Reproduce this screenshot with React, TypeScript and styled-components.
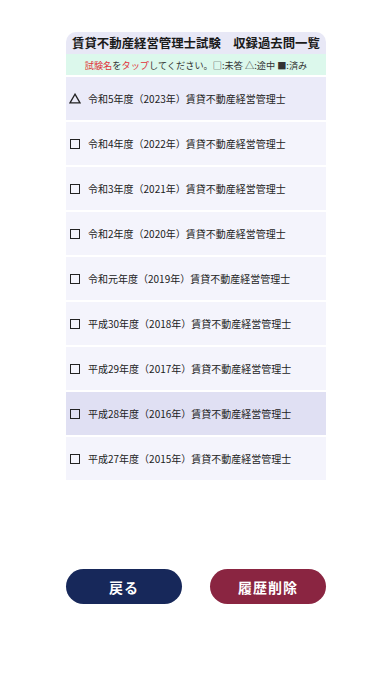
import { createGlobalStyle } from 'styled-components'
import styled from 'styled-components'

const GlobalStyle = createGlobalStyle`
  html, body {
    margin: 0;
    padding: 0;
    background: #ffffff;
    font-family: "Noto Sans CJK JP", "Noto Sans", sans-serif;
  }
`

const Page = styled.div`
  width: 392px;
  height: 696px;
  display: flex;
  flex-direction: column;
  align-items: center;
  padding-top: 32px;
  box-sizing: border-box;
`

const Panel = styled.div`
  width: 260px;
  display: flex;
  flex-direction: column;
`

const Title = styled.div`
  height: 22px;
  display: flex;
  align-items: center;
  justify-content: center;
  background: #e8e8f6;
  border-radius: 10px 10px 0 0;
  font-size: 12.4px;
  font-weight: 700;
  color: #1a1a1a;
  white-space: nowrap;
`

const Hint = styled.div`
  height: 21px;
  display: flex;
  align-items: center;
  justify-content: center;
  background: #dcf8ec;
  font-size: 9.2px;
  color: #333;
  white-space: nowrap;
`

const Red = styled.span`
  color: #e0333a;
`

const List = styled.div`
  display: flex;
  flex-direction: column;
  gap: 2px;
  margin-top: 2px;
`

const Row = styled.div<{ $tone: 'active' | 'pressed' | 'plain' }>`
  height: 43px;
  display: flex;
  align-items: center;
  padding-left: 3px;
  background: ${({ $tone }) =>
    $tone === 'active' ? '#ebebf9' : $tone === 'pressed' ? '#e0e0f3' : '#f4f4fc'};
  font-size: 10px;
  color: #222;
  white-space: nowrap;
`

const Mark = styled.span`
  width: 12px;
  display: inline-flex;
  justify-content: center;
  align-items: center;
  margin-right: 7px;
`

const Box = styled.span`
  width: 8px;
  height: 8px;
  border: 1.4px solid #222;
`

const Buttons = styled.div`
  width: 260px;
  display: flex;
  justify-content: space-between;
  margin-top: 89px;
`

const Button = styled.button<{ $color: string }>`
  width: 116px;
  height: 35px;
  border: none;
  border-radius: 18px;
  background: ${({ $color }) => $color};
  color: #ffffff;
  font-family: inherit;
  font-size: 14px;
  font-weight: 700;
  letter-spacing: 1px;
`

const Triangle = () => (
  <svg width="12" height="11" viewBox="0 0 12 11">
    <path d="M6 1.2 L11 9.8 H1 Z" fill="none" stroke="#222" strokeWidth="1.3" strokeLinejoin="miter" />
  </svg>
)

const exams = [
  { label: '令和5年度（2023年）賃貸不動産経営管理士', state: 'partial' },
  { label: '令和4年度（2022年）賃貸不動産経営管理士', state: 'none' },
  { label: '令和3年度（2021年）賃貸不動産経営管理士', state: 'none' },
  { label: '令和2年度（2020年）賃貸不動産経営管理士', state: 'none' },
  { label: '令和元年度（2019年）賃貸不動産経営管理士', state: 'none' },
  { label: '平成30年度（2018年）賃貸不動産経営管理士', state: 'none' },
  { label: '平成29年度（2017年）賃貸不動産経営管理士', state: 'none' },
  { label: '平成28年度（2016年）賃貸不動産経営管理士', state: 'none' },
  { label: '平成27年度（2015年）賃貸不動産経営管理士', state: 'none' },
]

export default function App() {
  return (
    <Page>
      <GlobalStyle />
      <Panel>
        <Title>賃貸不動産経営管理士試験　収録過去問一覧</Title>
        <Hint>
          <Red>試験名</Red>を<Red>タップ</Red>してください。□:未答 △:途中 ■:済み
        </Hint>
        <List>
          {exams.map((exam, i) => (
            <Row key={exam.label} $tone={i === 0 ? 'active' : i === 7 ? 'pressed' : 'plain'}>
              <Mark>{exam.state === 'partial' ? <Triangle /> : <Box />}</Mark>
              {exam.label}
            </Row>
          ))}
        </List>
      </Panel>
      <Buttons>
        <Button $color="#17285a">戻る</Button>
        <Button $color="#8a2541">履歴削除</Button>
      </Buttons>
    </Page>
  )
}
